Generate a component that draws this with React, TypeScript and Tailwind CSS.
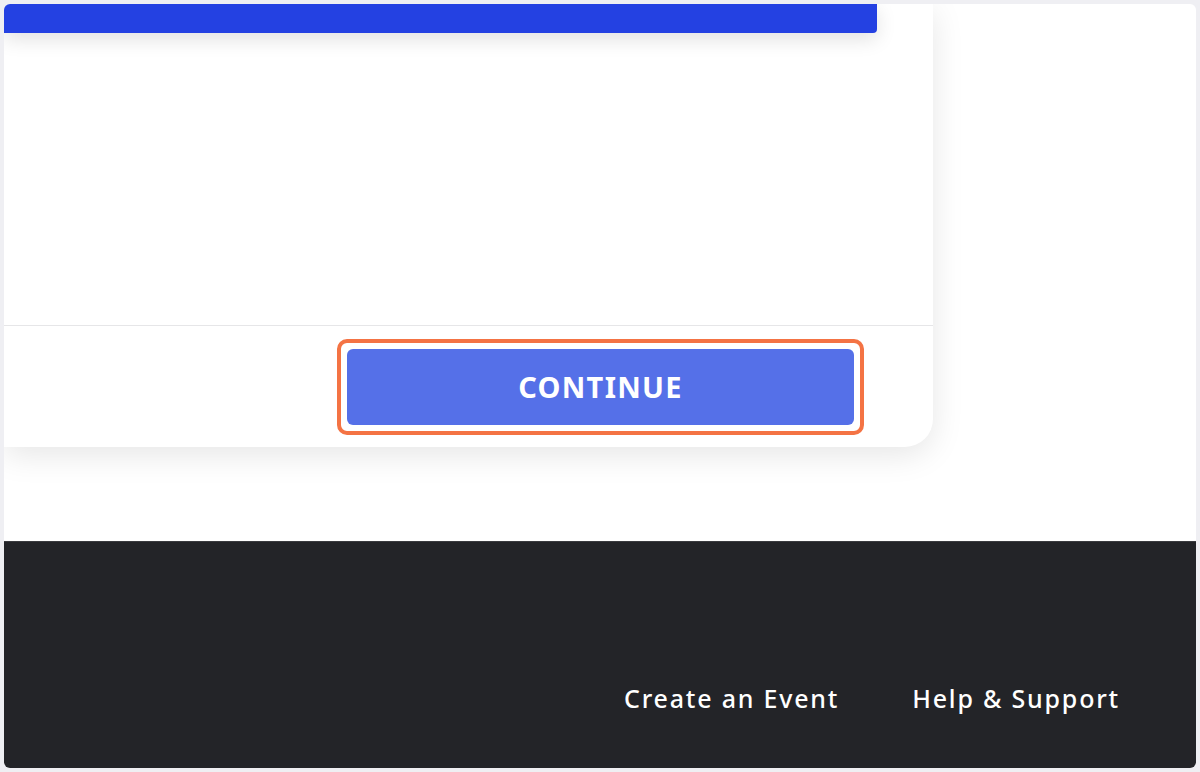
export default function App() {
  return (
    <div className="w-[1200px] h-[772px] bg-[#efeff3] pt-[4px] pl-[4px] pr-[4px] pb-[4px] font-['Noto_Sans',_sans-serif]">
      <div className="h-full flex flex-col bg-white rounded-[6px] overflow-hidden">
        <div className="h-[537px] shrink-0">
          <div className="w-[929px] h-[443px] bg-white rounded-br-[28px] shadow-[0_8px_32px_rgba(0,0,0,0.1)] flex flex-col">
            <div className="w-[873px] h-[29px] bg-[#2441e2] rounded-br-[4px] shadow-[0_6px_20px_rgba(0,0,0,0.12)]" />
            <div className="flex-1" />
            <div className="border-t border-[#e6e6e8] h-[122px] flex items-center justify-end pr-[69px]">
              <div className="rounded-[10px] border-[4px] border-[#f47344] p-[6px]">
                <button className="w-[507px] h-[76px] rounded-[6px] bg-[#5570e8] text-white text-[29px] font-bold tracking-[1.3px]">
                  CONTINUE
                </button>
              </div>
            </div>
          </div>
        </div>
        <footer className="flex-1 bg-[#232428] border-t border-[#3a3b3f] flex items-start justify-end pr-[76px] pt-[136px]">
          <div className="flex gap-[73px] text-white text-[25px] font-medium tracking-[1.8px] leading-[40px]">
            <a>Create an Event</a>
            <a>Help &amp; Support</a>
          </div>
        </footer>
      </div>
    </div>
  );
}
